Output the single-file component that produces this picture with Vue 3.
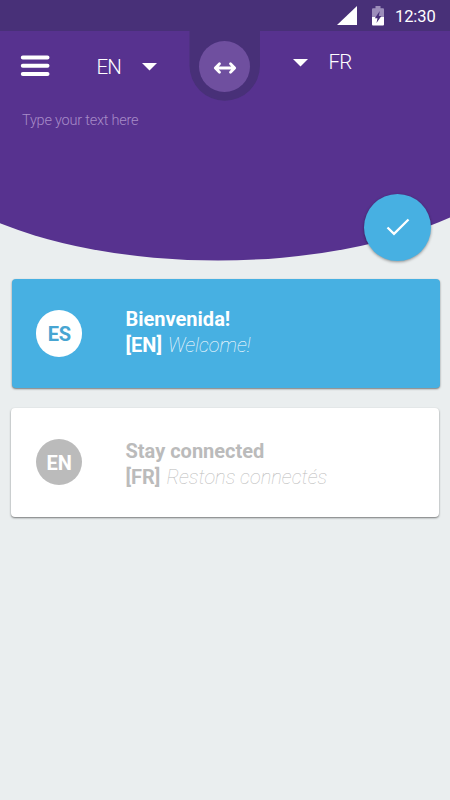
<script setup>
const cards = [
  { code: 'ES', title: 'Bienvenida!', target: '[EN]', text: 'Welcome!', tone: 'active' },
  { code: 'EN', title: 'Stay connected', target: '[FR]', text: 'Restons connectés', tone: 'plain' },
]
</script>

<template>
  <div class="screen">
    <section class="hero">
      <svg class="hero-shape" viewBox="0 0 450 270" aria-hidden="true">
        <rect width="450" height="112" fill="#57328f" />
        <ellipse cx="218" cy="111.500" rx="330" ry="149" fill="#57328f" />
        <path d="M0 0H450V31H260V65.500A35.250 35.250 0 0 1 189.500 65.500V31H0Z" fill="#483078" />
      </svg>
      <div class="status">
        <svg class="signal" width="20" height="19" viewBox="0 0 20 19"><path d="M0 19L20 0V19Z" fill="#fff" /></svg>
        <svg class="battery" width="12" height="20" viewBox="0 0 12 20">
          <path d="M0 3.200Q0 2.200 1 2.200H3.500V0H8.500V2.200H11Q12 2.200 12 3.200V11H0Z" fill="#9c8dba" />
          <path d="M0 11H12V18.500Q12 19.500 11 19.500H1Q0 19.500 0 18.500Z" fill="#fff" />
          <path d="M7.800 5L2.800 12.300H5.500L4.500 17L9.400 10H6.800Z" fill="#483078" />
        </svg>
        <span class="time">12:30</span>
      </div>
      <header class="bar">
        <svg class="menu" width="30" height="22" viewBox="0 0 30 22">
          <path d="M2.800 2.500H27.500M2.800 10.800H27.500M2.800 19H27.500" stroke="#fff" stroke-width="4" stroke-linecap="round" />
        </svg>
        <span class="lang from">EN</span>
        <svg class="caret from-caret" width="15" height="8" viewBox="0 0 15 8"><path d="M0 0H15L7.500 7.500Z" fill="#fff" /></svg>
        <div class="swap">
          <svg width="24" height="14" viewBox="0 0 24 14">
            <path d="M2.500 7H21.500M6.500 2.800L2.300 7L6.500 11.200M17.500 2.800L21.700 7L17.500 11.200" fill="none" stroke="#fff" stroke-width="2.800" stroke-linecap="round" stroke-linejoin="round" />
          </svg>
        </div>
        <svg class="caret to-caret" width="15" height="8" viewBox="0 0 15 8"><path d="M0 0H15L7.500 7.500Z" fill="#fff" /></svg>
        <span class="lang to">FR</span>
      </header>
      <div class="hint">Type your text here</div>
      <div class="fab">
        <svg width="24" height="18" viewBox="0 0 24 18">
          <path d="M1.500 9.500L8 15.800L22.500 1.500" fill="none" stroke="#fff" stroke-width="2.300" />
        </svg>
      </div>
    </section>
    <main class="list">
      <article v-for="card in cards" :key="card.title" class="card" :class="card.tone">
        <div class="badge">{{ card.code }}</div>
        <div class="copy">
          <div class="title">{{ card.title }}</div>
          <div class="line"><span class="target">{{ card.target }}</span><span class="text">{{ card.text }}</span></div>
        </div>
      </article>
    </main>
  </div>
</template>

<style>
body { margin: 0; background: #eaeeef; }
</style>

<style scoped>
.screen {
  width: 450px;
  height: 800px;
  overflow: hidden;
  background: #eaeeef;
  font-family: Roboto, "Liberation Sans", sans-serif;
}
svg { display: block; flex: none; }
.hero { position: relative; height: 279.400px; }
.hero-shape { position: absolute; top: 0; left: 0; width: 450px; height: 270px; }
.status {
  position: relative;
  display: flex;
  align-items: flex-start;
  justify-content: flex-end;
  box-sizing: border-box;
  height: 31px;
  padding: 6px 14px 0 0;
  color: #fff;
}
.battery { margin-left: 15px; }
.time { width: 41px; margin-left: 11px; font-size: 16.500px; line-height: 21px; letter-spacing: -.1px; white-space: nowrap; }
.bar { position: relative; display: flex; align-items: flex-start; height: 73px; }
.menu { margin: 24px 0 0 20px; }
.lang { color: #fff; font-size: 20.500px; font-weight: 300; line-height: 24px; width: 26px; letter-spacing: -.8px; }
.from { margin: 24px 0 0 46px; text-indent: .5px; }
.from-caret { margin: 32px 0 0 20px; }
.swap {
  display: flex;
  align-items: center;
  justify-content: center;
  width: 51px;
  height: 51px;
  margin: 10px 0 0 42px;
  border-radius: 50%;
  background: #6f4f9f;
}
.swap svg { margin-top: 3px; }
.to-caret { margin: 28px 0 0 43px; }
.to { margin: 19px 0 0 20px; text-indent: .5px; }
.hint {
  position: relative;
  padding: 7px 0 0 22px;
  color: #a78cc8;
  font-size: 14.500px;
  font-weight: 300;
  letter-spacing: -.22px;
  line-height: 20px;
}
.fab {
  position: absolute;
  top: 193.500px;
  left: 364px;
  display: flex;
  align-items: center;
  justify-content: center;
  width: 67px;
  height: 67px;
  border-radius: 50%;
  background: #47b0e2;
  box-shadow: 0 1px 3px rgba(0, 0, 0, .4);
}
.list { display: flex; flex-direction: column; gap: 19.600px; padding: 0 10px 0 11px; }
.card {
  display: flex;
  box-sizing: border-box;
  height: 109px;
  width: 428px;
  border-radius: 4px;
  box-shadow: 0 1px 2px rgba(0, 0, 0, .5);
}
.active { margin-left: 1px; background: #47b0e2; color: #fff; }
.plain { background: #fff; color: #bbb; }
.badge {
  flex: none;
  width: 46.500px;
  height: 46.500px;
  margin: 31px 0 0 23.500px;
  border-radius: 50%;
  background: #fff;
  color: #47a5d2;
  font-size: 20px;
  font-weight: 700;
  line-height: 48px;
  text-align: center;
  text-indent: 1px;
}
.plain .badge { margin-left: 24.500px; background: #bbb; color: #fff; }
.active .badge { letter-spacing: -.4px; }
.copy { padding: 27px 0 0 43.500px; font-size: 20px; line-height: 26px; white-space: nowrap; }
.plain .copy { padding-top: 30px; }
.title, .target { font-weight: 700; }
.text { margin-left: 6px; font-weight: 100; font-style: italic; }
</style>
